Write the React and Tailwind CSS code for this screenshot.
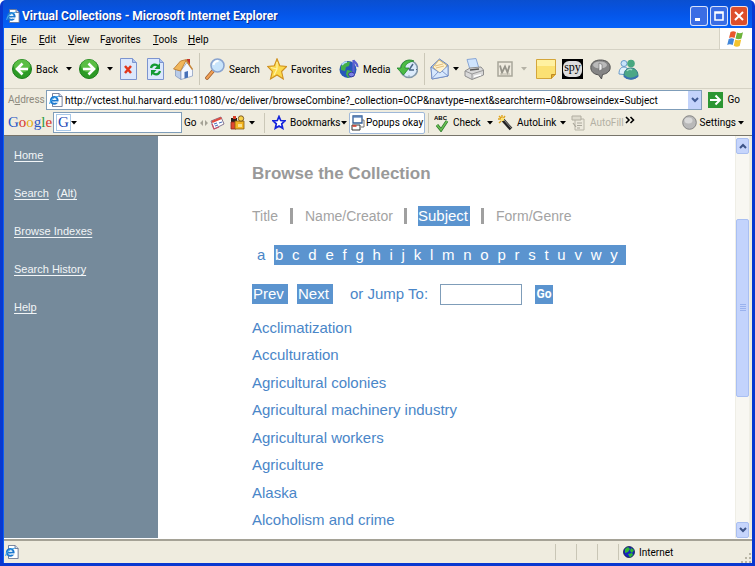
import React from "react";

const letters = "bcdefghijklmnoprstuvwy".split("");
const subjects = [
  "Acclimatization",
  "Acculturation",
  "Agricultural colonies",
  "Agricultural machinery industry",
  "Agricultural workers",
  "Agriculture",
  "Alaska",
  "Alcoholism and crime",
];

function Svg({ w = 20, h = 20, box, children, className = "" }) {
  return (
    <svg width={w} height={h} viewBox={box || `0 0 ${w} ${h}`} className={`shrink-0 ${className}`} aria-hidden="true">
      {children}
    </svg>
  );
}

function Down({ className = "", fill = "#000" }) {
  return (
    <Svg w={6} h={4} className={className}>
      <path d="M0 0h6L3 3.5z" fill={fill} />
    </Svg>
  );
}

function IePage({ size = 16 }) {
  return (
    <Svg w={size} h={size} box="0 0 16 16">
      <path d="M4 .5h7.5l3.500 3.500V15.500H4z" fill="#fff" stroke="#62708f" />
      <path d="M11.500 .5V4H15" fill="#cfdcf5" stroke="#62708f" />
      <circle cx="6" cy="8.500" r="3.900" fill="#e9f6ff" stroke="#1c78cf" strokeWidth="2.200" />
      <path d="M3 8.800h7" stroke="#1c78cf" strokeWidth="1.800" />
      <path d="M7.500 10.300h4" stroke="#fff" strokeWidth="1.400" />
      <path d="M.8 12.500C.5 9 6 3.500 11.500 3.800" fill="none" stroke="#3fa5ea" strokeWidth="1.200" />
    </Svg>
  );
}

function Round({ flip }) {
  return (
    <Svg h={22} box="0 0 20 22">
      <circle cx="10" cy="11" r="9.500" fill="#2d9a26" stroke="#1d7f1c" />
      <ellipse cx="10" cy="8" rx="8" ry="6.500" fill="#69c94f" opacity=".75" />
      <path
        d="M16 11H5.500M10.500 5.500L5 11l5.500 5.500"
        fill="none"
        stroke="#fff"
        strokeWidth="2.600"
        transform={flip ? "translate(20 0) scale(-1 1)" : undefined}
      />
    </Svg>
  );
}

function PageBase() {
  return (
    <>
      <path d="M.5 .5h12l4 4v17H.5z" fill="#dce8fc" stroke="#7c94cf" />
      <path d="M12.500 .5v4h4" fill="#a9c0ee" stroke="#7c94cf" />
    </>
  );
}

function Stop() {
  return (
    <Svg w={17} h={22}>
      <PageBase />
      <path d="M5 8l6 7M11 8l-6 7" stroke="#e2371c" strokeWidth="2.500" />
    </Svg>
  );
}

function Refresh() {
  return (
    <Svg w={17} h={22}>
      <PageBase />
      <path d="M4 10c1-4 5-4 7-2" fill="none" stroke="#149a33" strokeWidth="2.300" />
      <path d="M13 5v6H7.500z" fill="#149a33" />
      <path d="M13 13c-1 4-5 4-7 2" fill="none" stroke="#149a33" strokeWidth="2.300" />
      <path d="M4 18v-6h5.500z" fill="#149a33" />
    </Svg>
  );
}

function HomeIcon() {
  return (
    <Svg h={22}>
      <path d="M14 1h3v6h-3z" fill="#c4352b" />
      <path d="M2.500 11L8 13v8.500L2.500 18z" fill="#b8cbe8" stroke="#7d93bd" strokeWidth=".7" />
      <path d="M8 12.500l6-8 5.500 7V18L8 21.500z" fill="#f3f7ff" stroke="#8296bb" strokeWidth=".7" />
      <path d="M.5 11L7.500 3l6-1.500L7.500 13z" fill="#f0b65b" stroke="#b5732a" strokeWidth=".8" />
      <path d="M13 2l6.500 9.500" stroke="#c98738" strokeWidth="1.500" />
      <path d="M11.500 14l3.500-.9V19.500l-3.500 1z" fill="#4771b8" />
    </Svg>
  );
}

function SearchIcon() {
  return (
    <Svg h={22}>
      <path d="M8 13l-6 7" stroke="#9d5a2a" strokeWidth="3.600" strokeLinecap="round" />
      <path d="M8 13l-6 7" stroke="#f0a054" strokeWidth="2.200" strokeLinecap="round" />
      <circle cx="12.500" cy="7.500" r="6.500" fill="#c8e4fb" stroke="#8aa4cf" strokeWidth="1.600" />
      <path d="M8.500 7c.5-3 3-4 5-4" fill="none" stroke="#fff" strokeWidth="2" />
    </Svg>
  );
}

function Star() {
  return (
    <Svg h={22}>
      <path d="M10 .8l2.800 7 6.800.7-5 5 1.700 7.500L10 17l-6.500 4 1.800-7.700L.6 8.400 7.300 7.800z" fill="#fbd94b" stroke="#cf8f1c" strokeWidth="1.100" />
      <path d="M10 4v7L4 9.500M10 11l-3 6" fill="none" stroke="#fff2a4" strokeWidth="1.200" />
    </Svg>
  );
}

function MediaIcon() {
  return (
    <Svg h={22}>
      <circle cx="9" cy="11.500" r="8.500" fill="#2657ba" />
      <path d="M2 8c2-4 6-5 9-4l-1 4-3 1-1 4-4-1zM8 12l5 1-1 5-3 2-2-4z" fill="#44b04a" />
      <path d="M3 7c2-3 4-3 5-3" stroke="#b5dcff" strokeWidth="1.500" fill="none" />
      <path d="M14.500 2v14M14.500 2c1 3 4.500 3 4 7" fill="none" stroke="#5a5fd0" strokeWidth="2.200" />
      <ellipse cx="12.500" cy="16.500" rx="3" ry="2.300" fill="#7d82e6" stroke="#343a9d" />
    </Svg>
  );
}

function HistoryIcon() {
  return (
    <Svg w={21} h={22}>
      <circle cx="12" cy="11" r="8.500" fill="#dcebfb" stroke="#8398a9" strokeWidth="1.600" />
      <path d="M12 12l4-6M12 12h5" stroke="#4b6887" strokeWidth="1.500" />
      <path d="M17 3C11 0 4 4 4 10H0l6.500 7 5.500-7H8c0-4 4-6 9-7z" fill="#4cbb46" stroke="#20862a" strokeWidth=".8" />
      <path d="M12 17.500v1M19 11.500h1" stroke="#50677e" />
    </Svg>
  );
}

function MailIcon() {
  return (
    <Svg w={19} h={22}>
      <path d="M1 9l8.500-8L18 7v11L2 21z" fill="#a9c8f4" stroke="#6b87c0" />
      <path d="M3 9l6-7 7.500 5-1 6-5 3z" fill="#fff2cf" stroke="#d1a94e" strokeWidth=".8" />
      <path d="M5 8l8-2M6 10l8-2" stroke="#d9b168" strokeWidth=".8" />
      <path d="M1 9l9 6 8-7.500V18L2 21z" fill="#d7e8fd" stroke="#6b87c0" strokeWidth=".8" />
      <path d="M2 20.500L8 14M18 18l-6-5" stroke="#6b87c0" strokeWidth=".8" />
    </Svg>
  );
}

function PrintIcon() {
  return (
    <Svg h={22}>
      <path d="M3 1.500L12 .5l3 10-9 1z" fill="#cfe4fd" stroke="#88a6d4" />
      <path d="M1 13l5-3 11-1 2.500 3v5L8 21.500 1 18z" fill="#d9d9d9" stroke="#8e8e8e" />
      <path d="M1 13l7 3 11-3.500M8 16v5.500" stroke="#989898" fill="none" />
      <path d="M6 12l9-1" stroke="#555" strokeWidth="1.500" />
      <path d="M10 18.500l7-1.700" stroke="#fff" strokeWidth="1.500" />
    </Svg>
  );
}

function WordIcon() {
  return (
    <Svg w={16} h={16}>
      <path d="M1 1h14v14H1z" fill="#efebdf" stroke="#a9a79b" strokeWidth="1.500" />
      <path d="M3 4.500l2 7 3-6 2.500 6 2-7" fill="none" stroke="#96948a" strokeWidth="1.800" />
      <path d="M3 13h10" stroke="#bbb8aa" />
    </Svg>
  );
}

function NoteIcon() {
  return (
    <Svg>
      <path d="M.5 .5h19v15l-4 4H.5z" fill="#fbe173" stroke="#d4a63a" />
      <path d="M1 1h18v6H1z" fill="#fff1a1" />
      <path d="M15.500 19.500v-4h4" fill="#e1ad31" stroke="#bd8a24" />
    </Svg>
  );
}

function ChatIcon() {
  return (
    <Svg w={21} h={21}>
      <path d="M10.500 1C4.500 1 .8 4 .8 8.500s3.700 7 7.700 7.300L11.500 20l1-4.500c5-.8 7.700-3.500 7.700-7C20.200 4 16.500 1 10.500 1z" fill="#858585" stroke="#515151" />
      <ellipse cx="10" cy="6" rx="7" ry="3.500" fill="#bababa" />
      <path d="M9 4l3 1.500v5L9 12z" fill="#f2f2f2" stroke="#666" strokeWidth=".6" />
    </Svg>
  );
}

function MessengerIcon() {
  return (
    <Svg w={21} h={21}>
      <circle cx="6" cy="4.500" r="3" fill="#c9e4fa" stroke="#679bcb" />
      <path d="M1 15c0-5 2-7 5-7s4 2 4 5v3z" fill="#e2f1fc" stroke="#679bcb" />
      <circle cx="13" cy="4.500" r="3.800" fill="#49a880" />
      <path d="M6 17c0-6 3-8 7-8 5 0 7 4 7 8-3 4-11 4-14 0z" fill="#4ba786" stroke="#327c87" />
      <path d="M9 12c1-2 4-2 5-1" stroke="#a6dccb" strokeWidth="1.500" fill="none" />
      <path d="M6 17c3 3 9 4 14 0" stroke="#3871b2" strokeWidth="2" fill="none" />
    </Svg>
  );
}

function Flag() {
  return (
    <Svg w={18} h={18}>
      <path d="M3.500 2C5.500 .8 7 1 9 2L7.500 8C5.500 7 4 7 2 8z" fill="#e9572b" />
      <path d="M10 2.500c2 1 4 1 6-.2L14.500 8.500c-2 1-4 1-6 0z" fill="#6db33b" />
      <path d="M1.700 9C3.700 8 5.300 8 7.200 9l-1.500 6C3.700 14 2 14 .2 15z" fill="#4186d9" />
      <path d="M8.200 9.500c2 1 4 1 6 0L12.700 16c-2 1-4 1-6-.3z" fill="#f3c32f" />
    </Svg>
  );
}

function BlueStar() {
  return (
    <Svg w={14} h={15}>
      <path d="M7 1.500l1.700 4 4.300.3-3.300 3 1 4.500L7 11l-3.700 2.300 1-4.500L1 5.800l4.300-.3z" fill="#fff" stroke="#1424dc" strokeWidth="1.700" />
    </Svg>
  );
}

function PopupIcon() {
  return (
    <Svg w={14} h={16}>
      <path d="M2 1h9v7H2z" fill="#fff" stroke="#335d96" strokeWidth="1.300" />
      <path d="M2 2h9" stroke="#547fbc" strokeWidth="1.300" />
      <path d="M1 10h8v5H1z" fill="#fff" stroke="#333" />
      <path d="M1.500 11h4" stroke="#d83b2b" strokeWidth="1.600" />
      <path d="M13 5v7h-3M11 5h2" stroke="#777" fill="none" />
    </Svg>
  );
}

function CheckIcon() {
  return (
    <Svg w={15} h={18}>
      <text x="0" y="6" fontSize="6" fontWeight="700" fontFamily="Liberation Sans, sans-serif">ABC</text>
      <path d="M3 11l4 5 6-9" fill="none" stroke="#2b792b" strokeWidth="3" />
      <path d="M3 11l4 5 6-9" fill="none" stroke="#69bf52" strokeWidth="1.500" />
    </Svg>
  );
}

function WandIcon() {
  return (
    <Svg w={15} h={16}>
      <path d="M5 5l8 9" stroke="#222" strokeWidth="3.600" />
      <path d="M6 5l8 9" stroke="#aaa" strokeWidth=".8" />
      <path d="M4 0v3M0 4h3M1 1l2 2M7 1L5.500 3M1 8l2-2" stroke="#dfa319" strokeWidth="1.400" />
      <circle cx="4.500" cy="4.500" r="1.700" fill="#ffe269" />
    </Svg>
  );
}

function FillIcon() {
  return (
    <Svg w={15} h={16}>
      <path d="M4 4h9v11H4z" fill="#ece9dd" stroke="#b8b5a8" />
      <path d="M1 1h9v4H1z" fill="#dedbce" stroke="#b0ada0" />
      <path d="M6 8h5M6 10.500h5M6 13h3M2 8l3 4" stroke="#aaa79b" strokeWidth="1.200" />
    </Svg>
  );
}

function NewsIcon() {
  return (
    <Svg w={15} h={14}>
      <path d="M1 5l10-4 3 7-10 5z" fill="#fff" stroke="#84748f" />
      <path d="M1.500 5L11 1l.8 2L2.500 7z" fill="#df4b3f" />
      <path d="M4 8l3-1M5 10l3-1M9 7l3-1" stroke="#5475bc" strokeWidth="1.300" />
      <path d="M2 8L4 13l5-2" fill="none" stroke="#c7506b" strokeWidth="1.300" />
    </Svg>
  );
}

function BlocksIcon() {
  return (
    <Svg w={15} h={16}>
      <path d="M1 3h6v4H1z" fill="#26211c" />
      <path d="M3 1h3v3H3z" fill="#d73f29" />
      <path d="M1 7h5v7H1z" fill="#e2472c" stroke="#8a2a19" strokeWidth=".8" />
      <path d="M5 6h9v8H5z" fill="#f3b421" stroke="#875e13" strokeWidth=".8" />
      <path d="M8 9h4v3H8z" fill="#fbe08a" />
      <circle cx="11" cy="3.500" r="2.700" fill="#f7d24a" stroke="#664015" strokeWidth=".8" />
    </Svg>
  );
}

function Globe() {
  return (
    <Svg w={12} h={12}>
      <circle cx="6" cy="6" r="5.500" fill="#1624bd" stroke="#101a4a" strokeWidth=".8" />
      <path d="M2 3l3-2 2 2-2 3-3 1zM8 2l3 2-2 3-2-2zM5 8l4-1 1 2-3 2.500z" fill="#31b735" />
    </Svg>
  );
}

function Tool({ className = "", label, title, arrow, arrowClass = "", arrowFill, children }) {
  return (
    <button className={`flex h-9 shrink-0 items-center gap-1 ${className}`} aria-label={title || label}>
      {children}
      {label && <span>{label}</span>}
      {arrow && <Down className={arrowClass} fill={arrowFill} />}
    </button>
  );
}

const Sep = () => <span className="h-8 w-1.5 shrink-0 border-l border-[#cbc8b8]" />;
const GSep = () => <span className="h-5 w-1.5 shrink-0 border-l border-[#cbc8b8]" />;

function TitleBar() {
  const btn = "flex h-5 w-[18px] items-center justify-center rounded-[3px] border border-white/80";
  return (
    <header className="flex h-7 shrink-0 items-center bg-linear-to-b from-[#0a4fd0] via-[#0555e8] to-[#0562fa] pt-1 pr-1 pl-[3px]">
      <IePage size={14} />
      <h1 className="ml-0.5 flex-1 font-[Roboto,sans-serif] text-[12px] leading-5 font-bold text-white [text-shadow:1px_1px_#0a2f94]">
        Virtual Collections - Microsoft Internet Explorer
      </h1>
      <div className="flex gap-0.5">
        <button aria-label="Minimize" className={`${btn} bg-[#3a6de4]`}>
          <Svg w={12} h={12}><path d="M2 9.500h5" stroke="#fff" strokeWidth="3" /></Svg>
        </button>
        <button aria-label="Maximize" className={`${btn} bg-[#3a6de4]`}>
          <Svg w={12} h={12}><path d="M2 2h8v8H2zM2 3h8" fill="none" stroke="#fff" strokeWidth="1.600" /></Svg>
        </button>
        <button aria-label="Close" className={`${btn} bg-[#dd4f2b]`}>
          <Svg w={12} h={12}><path d="M2 2l8 8M10 2l-8 8" stroke="#fff" strokeWidth="2" /></Svg>
        </button>
      </div>
    </header>
  );
}

function MenuBar() {
  const items = [
    ["", "F", "ile", "w-7"],
    ["", "E", "dit", "w-[29px]"],
    ["", "V", "iew", "w-8"],
    ["F", "a", "vorites", "w-[53px]"],
    ["", "T", "ools", "w-[35px]"],
    ["", "H", "elp", "w-8"],
  ];
  return (
    <nav className="flex h-[22px] shrink-0 border-b border-[#d5d2c4] pl-[7px]">
      {items.map(([a, u, b, w]) => (
        <button key={u} className={`shrink-0 pt-0.5 text-left ${w}`}>
          {a}<span className="underline">{u}</span>{b}
        </button>
      ))}
      <span className="ml-auto flex w-[33px] items-center justify-center border-l border-[#d5d2c4] bg-white">
        <Flag />
      </span>
    </nav>
  );
}

function ToolBar() {
  return (
    <div className="flex h-[39px] shrink-0 items-center overflow-hidden border-b border-[#d5d2c4] pl-2">
      <Tool className="w-[67px]" label="Back" arrow arrowClass="ml-1"><Round /></Tool>
      <Tool className="w-[41px]" title="Forward" arrow arrowClass="ml-1"><Round flip /></Tool>
      <Tool className="w-[27px]" title="Stop"><Stop /></Tool>
      <Tool className="w-[26px]" title="Refresh"><Refresh /></Tool>
      <Tool className="w-[26px]" title="Home"><HomeIcon /></Tool>
      <Sep />
      <Tool className="w-[62px]" label="Search"><SearchIcon /></Tool>
      <Tool className="w-[72px]" label="Favorites"><Star /></Tool>
      <Tool className="w-[58px]" label="Media"><MediaIcon /></Tool>
      <Tool className="w-[27px]" title="History"><HistoryIcon /></Tool>
      <Sep />
      <Tool className="w-[34px]" title="Mail" arrow><MailIcon /></Tool>
      <Tool className="w-[33px]" title="Print"><PrintIcon /></Tool>
      <Tool className="w-[39px]" title="Edit page" arrow arrowClass="ml-1" arrowFill="#b5b2a6"><WordIcon /></Tool>
      <Tool className="w-[26px]" title="Note"><NoteIcon /></Tool>
      <Tool className="w-[28px]">
        <span className="flex h-5 w-[21px] items-center justify-center bg-black">
          <span className="h-4 rounded-md bg-[#ddd] px-px font-['Liberation_Serif',serif] text-[12px] leading-3">spy</span>
        </span>
      </Tool>
      <Tool className="w-[28px]" title="Discuss"><ChatIcon /></Tool>
      <Tool title="Messenger"><MessengerIcon /></Tool>
    </div>
  );
}

function AddressBar() {
  return (
    <form className="flex h-[21px] shrink-0 items-center pr-3 pl-1" onSubmit={(e) => e.preventDefault()}>
      <label htmlFor="address" className="w-[38px] shrink-0 text-[#8d8a7e]">
        A<span className="underline">d</span>dress
      </label>
      <div className="flex h-5 min-w-0 flex-1 items-center border border-[#7f9db9] bg-white pl-0.5">
        <IePage size={14} />
        <input
          id="address"
          className="h-[18px] min-w-0 flex-1 bg-transparent pt-px pl-0.5 outline-none"
          defaultValue="http://vctest.hul.harvard.edu:11080/vc/deliver/browseCombine?_collection=OCP&navtype=next&searchterm=0&browseindex=Subject"
        />
        <button type="button" aria-label="Show addresses" className="flex h-[18px] w-[13px] items-center justify-center bg-[#c3d3fb]">
          <Svg w={8} h={6}><path d="M1 1l3 3 3-3" fill="none" stroke="#3f5a94" strokeWidth="2" /></Svg>
        </button>
      </div>
      <button className="ml-1.5 flex items-center gap-1">
        <Svg w={15} h={16}>
          <path d="M0 0h15v16H0z" fill="#2b9632" />
          <path d="M2 8h10M7.500 3.500L12 8l-4.500 4.500" fill="none" stroke="#fff" strokeWidth="2" />
        </Svg>
        Go
      </button>
    </form>
  );
}

function GoogleBar() {
  return (
    <form className="flex h-[26px] shrink-0 items-center border-b border-[#77746a] pr-2 pl-1" onSubmit={(e) => e.preventDefault()}>
      <label htmlFor="gsearch" className="w-[45px] shrink-0 font-['Liberation_Serif',serif] text-[15px]">
        <span className="text-[#2a56c6]">G</span><span className="text-[#d6352b]">o</span><span className="text-[#e5ac14]">o</span><span className="text-[#2a56c6]">g</span><span className="text-[#2c9b40]">l</span><span className="text-[#d6352b]">e</span>
      </label>
      <div className="flex h-[21px] w-[129px] shrink-0 items-center border border-[#7f9db9] bg-white pl-0.5">
        <span className="w-[15px] border border-[#a8c8e8] text-center font-['Liberation_Serif',serif] text-[15px] leading-[15px] text-[#2347b5]">G</span>
        <Down />
        <input id="gsearch" className="h-4 min-w-0 flex-1 bg-transparent px-1 outline-none" />
      </div>
      <button className="w-[18px] shrink-0 pl-0.5 text-left">Go</button>
      <Svg w={8} h={6} className="mr-0.5"><path d="M3 0v6L0 3zM5 0v6l3-3z" fill="#a5a296" /></Svg>
      <Tool className="w-5" title="News"><NewsIcon /></Tool>
      <Tool className="w-[34px]" title="Gadgets" arrow><BlocksIcon /></Tool>
      <GSep />
      <button className="flex w-[79px] shrink-0 items-center pl-0.5">
        <BlueStar /><span className="ml-1">Bookmarks</span><Down />
      </button>
      <button className="flex h-[22px] w-[76px] shrink-0 items-center gap-px rounded-[2px] border border-[#9fb8d9] bg-white pl-px whitespace-nowrap">
        <PopupIcon /><span>Popups okay</span>
      </button>
      <span className="w-[3px] shrink-0" />
      <GSep />
      <Tool className="w-[64px]" label="Check" arrow arrowClass="ml-0.5"><CheckIcon /></Tool>
      <Tool className="w-[73px]" label="AutoLink" arrow><WandIcon /></Tool>
      <Tool className="w-[54px] text-[#b3b0a4]" label="AutoFill"><FillIcon /></Tool>
      <button aria-label="More buttons">
        <Svg w={10} h={14}><path d="M1 1l3 3-3 3M5.500 1l3 3-3 3" fill="none" stroke="#000" strokeWidth="1.600" /></Svg>
      </button>
      <button className="ml-auto flex items-center gap-0.5">
        <Svg w={15} h={15}>
          <circle cx="7.500" cy="7.500" r="6.800" fill="#b9b9b9" stroke="#858585" />
          <ellipse cx="6.500" cy="5.500" rx="4" ry="3" fill="#d9d9d9" />
        </Svg>
        <span>Settings</span><Down />
      </button>
    </form>
  );
}

function Sidebar() {
  const link = "underline underline-offset-2";
  return (
    <nav className="flex w-[154px] shrink-0 flex-col gap-[18px] bg-[#758a9b] pt-[9px] pl-2.5 font-['Liberation_Sans',sans-serif] text-[11px] leading-5 text-[#f2f5f7]">
      <a href="#home" className={link}>Home</a>
      <span className="flex gap-2">
        <a href="#search" className={link}>Search</a>
        <a href="#alt" className={link}>(Alt)</a>
      </span>
      <a href="#indexes" className={link}>Browse Indexes</a>
      <a href="#history" className={link}>Search History</a>
      <a href="#help" className={link}>Help</a>
    </nav>
  );
}

function Collection() {
  const bar = "h-4 w-[3px] bg-[#a0a0a0]";
  return (
    <main className="min-w-0 flex-1 overflow-hidden bg-white pl-[94px] font-['Liberation_Sans',sans-serif] text-[15px] leading-5 text-[#4a86c8]">
      <h2 className="pt-7 text-[17px] font-bold text-[#999]">Browse the Collection</h2>
      <nav className="mt-[22px] flex h-5 items-center text-[14px] text-[#a3a3a3]">
        <a href="#title" className="w-[38px]">Title</a>
        <span className={bar} />
        <a href="#name" className="ml-3 w-[99px]">Name/Creator</a>
        <span className={bar} />
        <a href="#subject" className="mr-[11px] ml-[11px] w-[52px] bg-[#5b94cf] text-[15px] text-white">Subject</a>
        <span className={bar} />
        <a href="#form" className="ml-3">Form/Genre</a>
      </nav>
      <nav className="mt-[19px] flex h-5">
        <a href="#a" className="w-[22px] pl-[5px]">a</a>
        <span className="flex w-[352px] justify-between bg-[#5b94cf] pr-2 pl-px text-white">
          {letters.map((l) => (
            <a key={l} href={`#${l}`}>{l}</a>
          ))}
        </span>
      </nav>
      <form className="mt-[18px] flex h-[22px] items-center" onSubmit={(e) => e.preventDefault()}>
        <button type="button" className="w-9 bg-[#5b94cf] pl-px text-left text-white">Prev</button>
        <button type="button" className="ml-[9px] w-9 bg-[#5b94cf] pl-px text-left text-white">Next</button>
        <label htmlFor="jump" className="ml-[17px] w-[90px]">or Jump To:</label>
        <input id="jump" className="h-[21px] w-[82px] border border-[#7f9db9] bg-white px-1 outline-none" />
        <button className="ml-[13px] h-[19px] w-[18px] bg-[#5b94cf] font-[Roboto,sans-serif] text-[12px] leading-[19px] font-bold text-white">Go</button>
      </form>
      <ul className="mt-[9px] grid h-[220px] grid-rows-8 items-center">
        {subjects.map((s) => (
          <li key={s}><a href={`#${s}`}>{s}</a></li>
        ))}
      </ul>
    </main>
  );
}

function ScrollBar() {
  const end = "flex h-4 shrink-0 items-center justify-center rounded-[2px] border border-[#aabff0] bg-[#c6d5fc]";
  return (
    <div className="flex w-[15px] shrink-0 flex-col border-x border-[#efeee6] bg-[#f8f7f2] pt-0.5">
      <button aria-label="Scroll up" className={end}>
        <Svg w={8} h={6}><path d="M1 5l3-3 3 3" fill="none" stroke="#3d5487" strokeWidth="2" /></Svg>
      </button>
      <div className="flex min-h-0 flex-1 flex-col">
        <div className="grow-66" />
        <div className="flex grow-170 items-center justify-center rounded-[2px] border border-[#a9bff2] bg-[#c3d3fc]">
          <Svg w={6} h={8}><path d="M0 .5h6M0 2.500h6M0 4.500h6M0 6.500h6" stroke="#9ab2ee" /></Svg>
        </div>
        <div className="grow-126" />
      </div>
      <button aria-label="Scroll down" className={end}>
        <Svg w={8} h={6}><path d="M1 1l3 3 3-3" fill="none" stroke="#3d5487" strokeWidth="2" /></Svg>
      </button>
    </div>
  );
}

function StatusBar() {
  const cell = "h-4 w-[21px] border-l border-[#c9c6b6]";
  return (
    <footer className="flex h-6 shrink-0 items-center border-t-2 border-[#a5a296] pl-px">
      <IePage size={14} />
      <span className="ml-auto flex items-center">
        <span className={cell} /><span className={cell} /><span className={cell} />
        <span className="flex h-4 w-[123px] items-center gap-1 border-l border-[#c9c6b6] pl-1"><Globe />Internet</span>
      </span>
      <Svg w={11} h={11} className="self-end">
        <path d="M8 1h2v2H8zM8 5h2v2H8zM4 5h2v2H4zM8 9h2v2H8zM4 9h2v2H4zM0 9h2v2H0z" fill="#b8b5a5" />
      </Svg>
    </footer>
  );
}

export default function App() {
  return (
    <div className="flex h-screen flex-col overflow-hidden rounded-t-md border-x-[3px] border-b-[3px] border-[#0838d0] bg-[#0555e8]">
      <TitleBar />
      <div className="flex min-h-0 flex-1 flex-col border-l border-[#0a5cf5] bg-[#efecdf] font-[Roboto,sans-serif] text-[10px] text-black">
        <MenuBar />
        <ToolBar />
        <AddressBar />
        <GoogleBar />
        <div className="flex min-h-0 flex-1 border-b border-white pr-0.5">
          <Sidebar />
          <Collection />
          <ScrollBar />
        </div>
        <StatusBar />
      </div>
    </div>
  );
}
